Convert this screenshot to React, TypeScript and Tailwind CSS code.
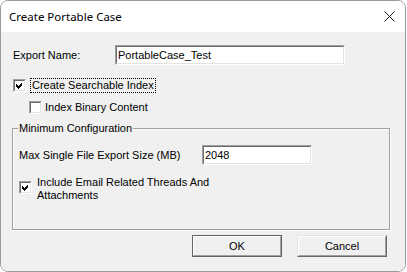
import React from 'react';

function Check() {
  return (
    <svg width="9" height="9" viewBox="0 0 9 9" shapeRendering="crispEdges">
      <polygon points="1,3 3,5 7,1 7,4 3,8 1,6" fill="#000" />
    </svg>
  );
}

function CheckBox({ checked }: { checked?: boolean }) {
  return (
    <span className="block w-[13px] h-[13px] shrink-0 border border-t-[#a0a0a0] border-l-[#a0a0a0] border-r-white border-b-white">
      <span className="flex items-center justify-center w-full h-full bg-white border border-t-[#696969] border-l-[#696969] border-r-[#e3e3e3] border-b-[#e3e3e3]">
        {checked && <Check />}
      </span>
    </span>
  );
}

function Field({ value, className }: { value: string; className: string }) {
  return (
    <div className={`h-[20px] border border-t-[#a0a0a0] border-l-[#a0a0a0] border-r-white border-b-white ${className}`}>
      <div className="h-full bg-white border border-t-[#696969] border-l-[#696969] border-r-[#e3e3e3] border-b-[#e3e3e3] pl-[1px] leading-[16px]">
        {value}
      </div>
    </div>
  );
}

function Button({ label, isDefault }: { label: string; isDefault?: boolean }) {
  const outer = isDefault
    ? 'border-[#646464]'
    : 'border-t-[#e3e3e3] border-l-[#e3e3e3] border-r-[#696969] border-b-[#696969]';
  return (
    <div className={`w-[90px] h-[22px] border ${outer}`}>
      <div className="h-full flex items-center justify-center bg-[#f0f0f0] border border-t-white border-l-white border-r-[#a0a0a0] border-b-[#a0a0a0]">
        {label}
      </div>
    </div>
  );
}

export default function App() {
  return (
    <div className="w-[407px] h-[272px] bg-white overflow-hidden">
      <div className="w-[406px] h-[272px] flex flex-col rounded-[8px] border border-[#9b9b9b] overflow-hidden">
        <div className="h-[31px] shrink-0 bg-white flex items-center justify-between pl-[8px] pr-[10px] font-['Noto_Sans',sans-serif] text-[11.5px] text-black">
          <span>Create Portable Case</span>
          <svg width="11" height="11" viewBox="0 0 11 11">
            <path d="M0.5 0.5 L10.5 10.5 M10.5 0.5 L0.5 10.5" stroke="#1a1a1a" strokeWidth="1" />
          </svg>
        </div>

        <div className="flex-1 bg-[#f0f0f0] pt-[13px] pl-[12px] pr-[18px] font-['Liberation_Sans',Arial,sans-serif] text-[11px] text-black">
          <div className="flex items-center h-[20px]">
            <span className="w-[102px]">Export Name:</span>
            <Field value="PortableCase_Test" className="w-[230px]" />
          </div>

          <div className="mt-[13px] flex items-center h-[15px]">
            <CheckBox checked />
            <span className="ml-[4px] h-[15px] px-[1px] leading-[13px] border border-dotted border-black">
              Create Searchable Index
            </span>
          </div>

          <div className="mt-[8px] pl-[16px] flex items-center h-[13px]">
            <CheckBox />
            <span className="ml-[3px] leading-[13px]">Index Binary Content</span>
          </div>

          <div className="relative mt-[14px] -ml-px w-[378px] h-[102px] border border-[#a0a0a0] shadow-[1px_1px_0_#fff,inset_1px_1px_0_#fff] pt-[16px] pl-[6px]">
            <span className="absolute left-[5px] -top-[7px] px-[1px] bg-[#f0f0f0] leading-[13px]">
              Minimum Configuration
            </span>
            <div className="flex items-center h-[20px]">
              <span className="w-[183px]">Max Single File Export Size (MB)</span>
              <Field value="2048" className="w-[110px]" />
            </div>
            <div className="mt-[11px] flex items-start">
              <span className="mt-[5px]">
                <CheckBox checked />
              </span>
              <span className="ml-[5px] leading-[13px]">
                Include Email Related Threads And
                <br />
                Attachments
              </span>
            </div>
          </div>

          <div className="mt-[5px] flex justify-end gap-[15px]">
            <Button label="OK" isDefault />
            <Button label="Cancel" />
          </div>
        </div>
      </div>
    </div>
  );
}
